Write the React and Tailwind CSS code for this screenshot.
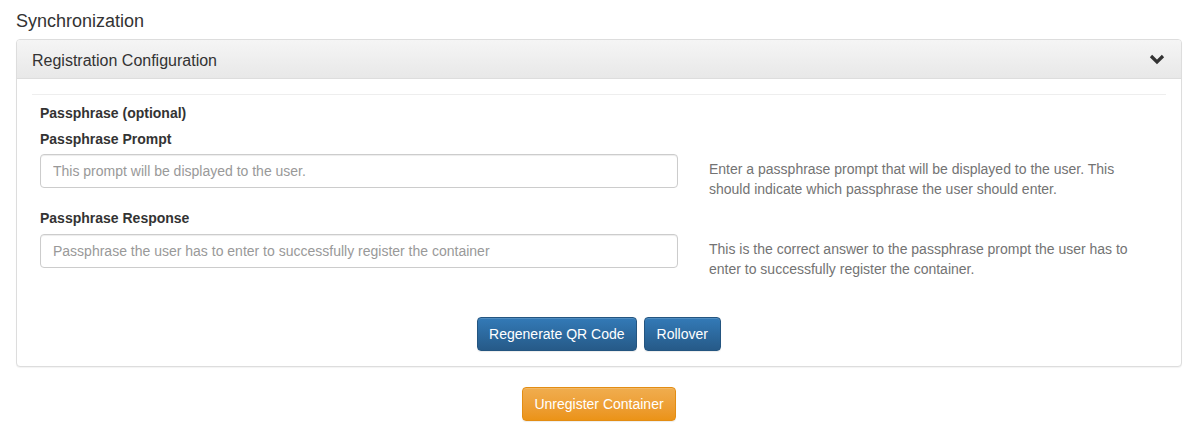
import React from "react";

export default function App() {
  const font = { fontFamily: '"Liberation Sans", Arial, Helvetica, sans-serif' };
  const inputCls =
    "w-[638px] shrink-0 h-[34px] px-[12px] border border-[#ccc] rounded-[4px] text-[14px] text-[#555] placeholder:text-[#999] shadow-[inset_0_1px_1px_rgba(0,0,0,0.075)] outline-none";
  const primary =
    "h-[34px] pt-[1px] text-[14px] text-white rounded-[4px] border border-[#245580] bg-gradient-to-b from-[#337ab7] to-[#265a88] shadow-[inset_0_1px_0_rgba(255,255,255,0.15),0_1px_1px_rgba(0,0,0,0.075)]";
  return (
    <div className="w-[1192px] h-[438px] bg-white text-[#333] pl-[16px] pr-[10px]" style={font}>
      <div className="pt-[11px] mb-[8px] text-[18px] leading-[20px]">Synchronization</div>
      <div className="border border-[#ddd] rounded-[4px] shadow-[0_1px_1px_rgba(0,0,0,0.05)] bg-white">
        <div className="flex items-center justify-between h-[39px] pt-[3px] px-[15px] border-b border-[#ddd] rounded-t-[3px] bg-gradient-to-b from-[#f5f5f5] to-[#e8e8e8]">
          <span className="text-[16px] leading-[18px]">Registration Configuration</span>
          <svg width="16" height="14" viewBox="0 0 16 14" className="mr-[1px] mt-[-3px]">
            <polyline points="2,4 8,10 14,4" fill="none" stroke="#333" strokeWidth="3.2" strokeLinecap="butt" strokeLinejoin="miter" />
          </svg>
        </div>
        <div className="p-[15px]">
          <div className="border-t border-[#eee] mb-[8px]" />
          <div className="px-[8px]">
            <div className="text-[14px] leading-[20px] font-bold mb-[6px]">Passphrase (optional)</div>
            <div className="text-[14px] leading-[20px] font-bold mb-[5px]">Passphrase Prompt</div>
            <div className="flex items-start gap-[31px]">
              <input className={inputCls} style={font} placeholder="This prompt will be displayed to the user." />
              <div className="w-[449px] mt-[5px] text-[14px] leading-[20px] text-[#737373]">
                Enter a passphrase prompt that will be displayed to the user. This should indicate which passphrase the user should enter.
              </div>
            </div>
            <div className="text-[14px] leading-[20px] font-bold mt-[9px] mb-[6px]">Passphrase Response</div>
            <div className="flex items-start gap-[31px]">
              <input
                className={inputCls}
                style={font}
                placeholder="Passphrase the user has to enter to successfully register the container"
              />
              <div className="w-[449px] mt-[5px] text-[14px] leading-[20px] text-[#737373]">
                This is the correct answer to the passphrase prompt the user has to enter to successfully register the container.
              </div>
            </div>
          </div>
          <div className="flex justify-center gap-[7px] mt-[38px]">
            <button className={primary + " px-[11px]"} style={font}>
              Regenerate QR Code
            </button>
            <button className={primary + " px-[12px]"} style={font}>
              Rollover
            </button>
          </div>
        </div>
      </div>
      <div className="flex justify-center mt-[20px]">
        <button
          className="h-[34px] pt-[1px] px-[11px] text-[14px] text-white rounded-[4px] border border-[#e38d13] bg-gradient-to-b from-[#f0ad4e] to-[#eb9316] shadow-[inset_0_1px_0_rgba(255,255,255,0.15),0_1px_1px_rgba(0,0,0,0.075)]"
          style={font}
        >
          Unregister Container
        </button>
      </div>
    </div>
  );
}
